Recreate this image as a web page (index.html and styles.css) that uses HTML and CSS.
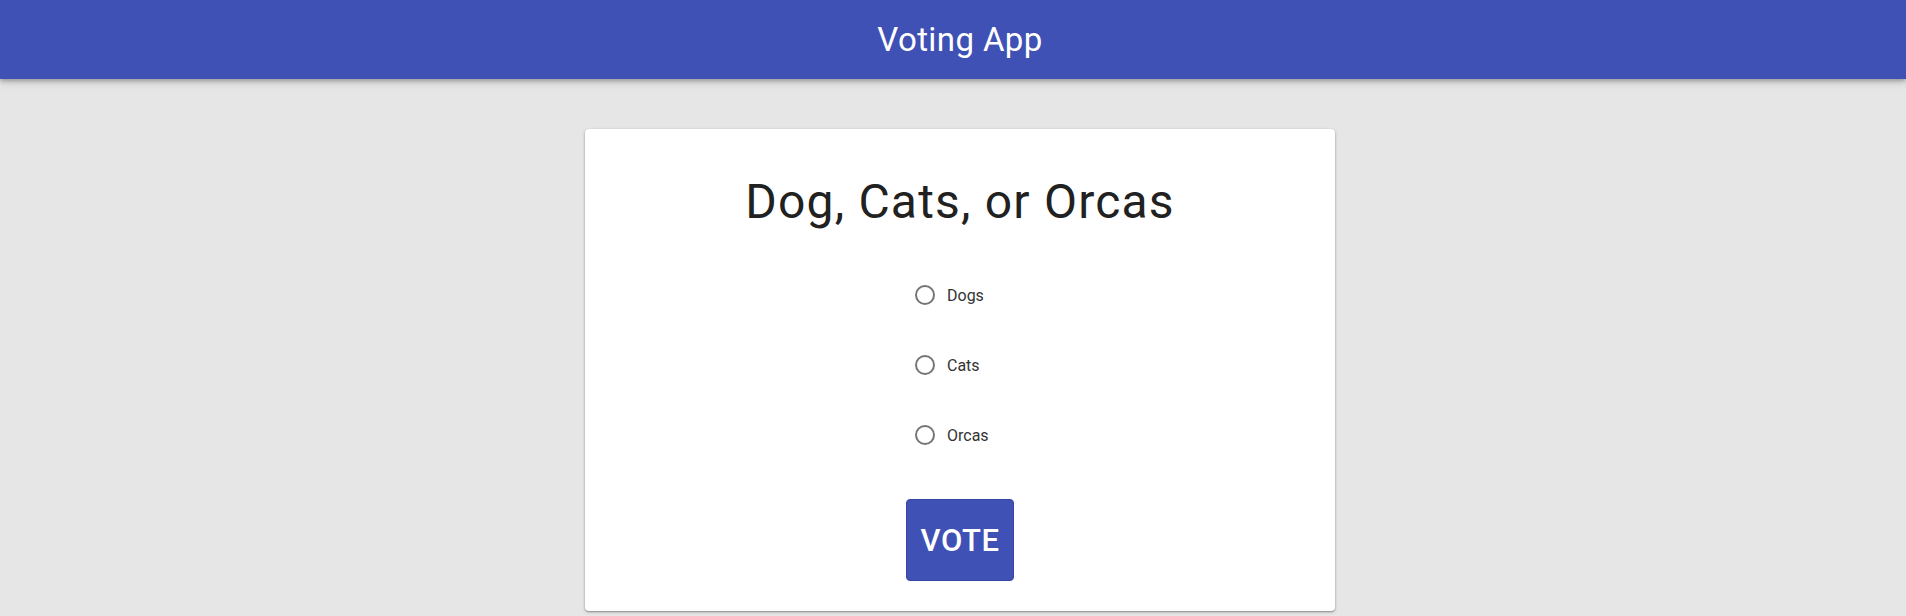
FILE: index.html
```html
<!DOCTYPE html>
<html lang="en">
<head>
<meta charset="utf-8">
<title>Voting App</title>
<link rel="stylesheet" href="styles.css">
</head>
<body>
<header class="app-bar">Voting App</header>
<main class="page">
  <section class="card">
    <h1 class="title">Dog, Cats, or Orcas</h1>
    <div class="options">
      <label class="option"><span class="radio"></span><span class="option-label">Dogs</span></label>
      <label class="option"><span class="radio"></span><span class="option-label">Cats</span></label>
      <label class="option"><span class="radio"></span><span class="option-label">Orcas</span></label>
    </div>
    <div class="actions">
      <button class="vote-btn">VOTE</button>
    </div>
  </section>
</main>
</body>
</html>
```
FILE: styles.css
```css
* { box-sizing: border-box; }
html, body { margin: 0; padding: 0; }
body {
  background: #e6e6e6;
  font-family: Roboto, "Noto Sans", sans-serif;
  height: 616px;
  overflow: hidden;
}
.app-bar {
  height: 79px;
  background: #3f51b5;
  color: #fff;
  font-size: 33px;
  letter-spacing: 0.4px;
  display: flex;
  align-items: center;
  justify-content: center;
  padding-left: 14px;
  box-shadow: 0 2px 4px rgba(0,0,0,0.25), 0 4px 8px rgba(0,0,0,0.12);
  position: relative;
  z-index: 1;
}
.page {
  padding-top: 50px;
  padding-left: 14px;
}
.card {
  width: 750px;
  height: 482px;
  margin: 0 auto;
  background: #fff;
  border-radius: 4px;
  box-shadow: 0 1px 3px rgba(0,0,0,0.35), 0 1px 1px rgba(0,0,0,0.12);
  padding-top: 45px;
  display: flex;
  flex-direction: column;
}
.title {
  margin: 0;
  font-size: 48px;
  font-weight: 400;
  line-height: 56px;
  letter-spacing: 1.2px;
  color: #212121;
  text-align: center;
}
.options {
  margin-top: 30px;
  padding-left: 330px;
  display: flex;
  flex-direction: column;
}
.option {
  height: 70px;
  display: flex;
  align-items: center;
  font-size: 16px;
  color: #333;
}
.radio {
  width: 20px;
  height: 20px;
  border: 2px solid #757575;
  border-radius: 50%;
  margin-right: 12px;
  flex: none;
}
.actions {
  margin-top: 29px;
  display: flex;
  justify-content: center;
}
.vote-btn {
  height: 82px;
  width: 108px;
  padding: 0;
  background: #3f51b5;
  color: #fff;
  border: 1px solid #3546a8;
  border-radius: 4px;
  font-family: Roboto, "Noto Sans", sans-serif;
  font-size: 31px;
  font-weight: 500;
  letter-spacing: 0.5px;
}
```
